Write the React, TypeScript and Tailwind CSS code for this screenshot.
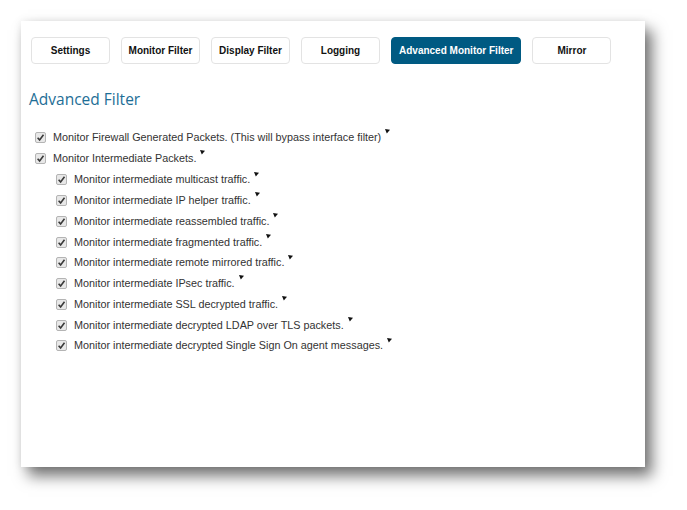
import React from "react";

const tabs = ["Settings", "Monitor Filter", "Display Filter", "Logging", "Advanced Monitor Filter", "Mirror"];

const subs = [
  "Monitor intermediate multicast traffic.",
  "Monitor intermediate IP helper traffic.",
  "Monitor intermediate reassembled traffic.",
  "Monitor intermediate fragmented traffic.",
  "Monitor intermediate remote mirrored traffic.",
  "Monitor intermediate IPsec traffic.",
  "Monitor intermediate SSL decrypted traffic.",
  "Monitor intermediate decrypted LDAP over TLS packets.",
  "Monitor intermediate decrypted Single Sign On agent messages.",
];

function Box() {
  return (
    <span className="w-[11px] h-[11px] rounded-[2px] border border-[#b4b4b4] bg-[#e8e8e8] flex items-center justify-center shrink-0">
      <svg width="9" height="9" viewBox="0 0 9 9">
        <path d="M1.6 4.8 L3.6 6.9 L7.5 1.7" fill="none" stroke="#3a3a3a" strokeWidth="1.6" />
      </svg>
    </span>
  );
}

function Mark() {
  return (
    <svg width="5" height="5" viewBox="0 0 5 5" className="self-start mt-[2px] ml-[4px]">
      <polygon points="0,0 5,0.8 1.8,4.5" fill="#111" />
    </svg>
  );
}

function Row({ text, sub }: { text: string; sub?: boolean }) {
  return (
    <div className={`flex items-center h-[20.75px] ${sub ? "pl-[21px]" : ""}`}>
      <Box />
      <span className="ml-[7px] text-[10.8px] text-[#333] leading-none">{text}</span>
      <Mark />
    </div>
  );
}

export default function App() {
  return (
    <div className="w-[687px] h-[510px] bg-white relative" style={{ fontFamily: '"Liberation Sans", Arial, sans-serif' }}>
      <div className="absolute left-[21px] top-[21px] w-[624px] h-[446px] bg-white shadow-[7px_9px_14px_rgba(0,0,0,0.55),0_0_8px_rgba(0,0,0,0.08)]">
        <div className="flex gap-[11px] pl-[10px] pt-[16px]">
          {tabs.map((t) => {
            const active = t === "Advanced Monitor Filter";
            return (
              <div
                key={t}
                className={`h-[27px] flex items-center justify-center rounded-[4px] text-[10px] font-bold ${
                  active
                    ? "bg-[#005a82] text-white px-[7px] border border-[#005a82]"
                    : "w-[79px] border border-[#e3e3e3] text-[#111] bg-white"
                }`}
              >
                {t}
              </div>
            );
          })}
        </div>
        <div className="pl-[8px] pt-[25px] text-[15.5px] leading-[20px] text-[#1e6e96]" style={{ fontFamily: '"Open Sans", sans-serif' }}>
          Advanced Filter
        </div>
        <div className="pl-[14px] pt-[18px] flex flex-col">
          <Row text="Monitor Firewall Generated Packets. (This will bypass interface filter)" />
          <Row text="Monitor Intermediate Packets." />
          <div className="h-[1px]" />
          {subs.map((s) => (
            <Row key={s} text={s} sub />
          ))}
        </div>
      </div>
    </div>
  );
}
